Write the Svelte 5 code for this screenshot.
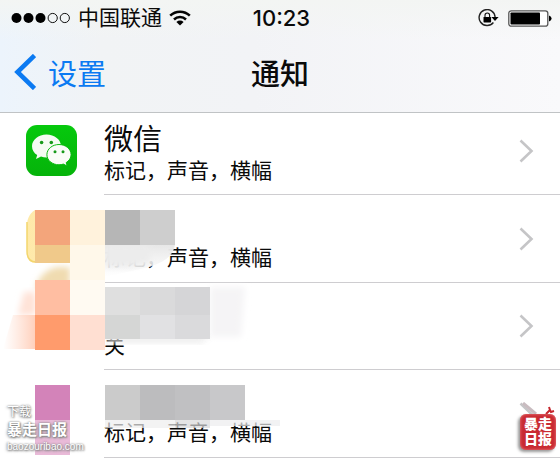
<script>
  const detail = '标记，声音，横幅';
  const rows = [
    { title: '微信', detail, icon: true },
    { title: '', detail },
    { title: '', detail: '关' },
    { title: '', detail }
  ];

  // x, y, width, height, colour and opacity of each redaction tile
  const tiles = [
    [35, 0, 35, 35, '#f3a57b', 1],
    [70, 0, 35, 35, '#fff2dc', 1],
    [105, 0, 35, 35, '#b6b6b6', 1],
    [140, 0, 35, 35, '#cecece', 1],
    [35, 35, 35, 18, '#f0c98a', 1],
    [70, 35, 35, 35, '#fff8ea', 1],
    [35, 70, 35, 35, '#ffbea2', 1],
    [70, 70, 35, 35, '#fffaf2', 1],
    [105, 77, 35, 28, '#dfdfdf', 1],
    [140, 77, 35, 28, '#dadadb', 1],
    [175, 77, 35, 28, '#d5d5d7', 1],
    [35, 105, 35, 35, '#ff9b6c', 1],
    [70, 105, 35, 35, '#ffdfd2', 1],
    [105, 105, 35, 24, '#d5d6d5', 1],
    [140, 105, 35, 24, '#e1e1e3', 1],
    [175, 105, 35, 24, '#dadadc', 1],
    [35, 175, 35, 35, '#d383b9', 1],
    [105, 175, 35, 35, '#cbcbcb', 1],
    [140, 175, 35, 35, '#bcbcbe', 1],
    [175, 175, 35, 35, '#c0c0c2', 1],
    [210, 175, 35, 35, '#c8c8ca', 1],
    [35, 210, 35, 35, '#e9bad8', 1],
    [105, 210, 70, 8, '#eeeeee', 0.7],
    [175, 210, 35, 8, '#d8d8da', 0.7],
    [210, 210, 70, 6, '#ececee', 0.7]
  ];
</script>

<div class="screen" lang="zh-CN">
  <header>
    <div class="status">
      <div class="carrier">
        <svg width="60" height="12" viewBox="0 0 60 12" role="img" aria-label="信号">
          <circle cx="5.5" cy="6" r="5" /><circle cx="17.5" cy="6" r="5" /><circle cx="29.5" cy="6" r="5" />
          <g fill="none" stroke="#111" stroke-width="1"><circle cx="41.7" cy="6" r="4.6" /><circle cx="53.8" cy="6" r="4.6" /></g>
        </svg>
        <span>中国联通</span>
        <svg class="wifi" width="22" height="16" viewBox="0 0 22 16" role="img" aria-label="Wi-Fi">
          <g fill="none" stroke="#050505" stroke-width="2.5">
            <path d="M1.2 5.7a14 14 0 0 1 19.6 0" /><path d="M5 9.5a8.6 8.6 0 0 1 12 0" />
          </g>
          <path d="M7.4 11.9a5.2 5.2 0 0 1 7.2 0L11 15.6z" />
        </svg>
      </div>
      <time>10:23</time>
      <div class="power">
        <svg width="21" height="18" viewBox="0 0 21 18" role="img" aria-label="竖排方向锁定">
          <path d="M15.4 13.5A8 8 0 1 1 17.1 8" fill="none" stroke="#222" stroke-width="1.4" />
          <path d="M13.4 8h7.2L17 12z" />
          <rect x="5.5" y="8" width="7.6" height="5.4" rx=".6" />
          <path d="M7 8.5V6.3a2.3 2.3 0 0 1 4.6 0v2.2" fill="none" stroke="#111" stroke-width="1.1" />
        </svg>
        <svg width="44" height="17" viewBox="0 0 44 17" role="img" aria-label="电池">
          <rect x=".8" y=".8" width="39" height="15.4" rx="2.5" fill="#fff" stroke="#555" stroke-width="1.3" />
          <rect x="2.500" y="2.500" width="29.500" height="12" rx=".8" />
          <path d="M41 5.500q2.600.8 2.600 3t-2.600 3z" />
        </svg>
      </div>
    </div>
    <nav>
      <a href="#settings">
        <svg width="22" height="36" viewBox="0 0 22 36" aria-hidden="true"><path d="M20.500 1.500 3.500 18l17 16.500" fill="none" stroke="#0b7af2" stroke-width="4.600" /></svg>
        设置
      </a>
      <h1>通知</h1>
    </nav>
  </header>

  <main>
    <ul>
      {#each rows as row}
        <li>
          <div class="app">
            {#if row.icon}
              <svg width="51" height="51" viewBox="0 0 51 51" role="img" aria-label="微信">
                <defs><linearGradient id="green" x2="0" y2="1"><stop stop-color="#06c90d" /><stop offset="1" stop-color="#05b30a" /></linearGradient></defs>
                <rect width="51" height="51" rx="11" fill="url(#green)" />
                <path d="M20.5 9.500C12.500 9.500 6 14.700 6 21.200c0 3.700 2 6.800 5.200 8.900L10 34l5-2.400a18 18 0 0 0 5.500 1c8 0 14.500-5.100 14.500-11.500S28.500 9.500 20.500 9.500z" fill="#f5fbf3" />
                <path d="M33 19.500c-6.700 0-12.100 4.500-12.100 10.200S26.300 39.800 33 39.800c1.600 0 3-.3 4.400-.7l3.800 2-1-3.500c3-1.900 4.900-4.700 4.900-7.900 0-5.700-5.400-10.200-12.100-10.200z" fill="#fafcf8" stroke="#08b90c" stroke-width="1" />
                <g fill="#17991a"><circle cx="15.600" cy="17.500" r="1.800" /><circle cx="25.300" cy="17.500" r="1.800" /><circle cx="29" cy="26.800" r="1.500" /><circle cx="37" cy="26.800" r="1.500" /></g>
              </svg>
            {/if}
          </div>
          <div class="body">
            <div class="text">
              <h2>{row.title}</h2>
              <p>{row.detail}</p>
            </div>
            <svg class="chevron" width="15" height="24" viewBox="0 0 15 24" aria-hidden="true"><path d="M1.500 1.500 12.500 12 1.500 22.500" fill="none" stroke="#c5c5c7" stroke-width="2.600" /></svg>
          </div>
        </li>
      {/each}
    </ul>

    <svg class="mosaic" width="290" height="249" viewBox="0 0 290 249" aria-hidden="true">
      <defs>
        <filter id="soft" x="-20%" y="-20%" width="140%" height="140%"><feGaussianBlur stdDeviation="3" /></filter>
        <linearGradient id="veil" x2="0" y2="1"><stop stop-color="#e7e7e7" /><stop offset="1" stop-color="#fff" stop-opacity=".75" /></linearGradient>
        <linearGradient id="peach"><stop stop-color="#ffd9c9" stop-opacity="0" /><stop offset="1" stop-color="#ffd0bc" /></linearGradient>
        <linearGradient id="gold"><stop stop-color="#ffeaa8" /><stop offset="1" stop-color="#f9e5bd" /></linearGradient>
      </defs>
      <path d="M35 0c-6 4-8 9-8 16v26q0 11 9 11h34V0z" fill="url(#gold)" />
      <path d="M27 12v29q0 11 9 11" fill="none" stroke="#f3d66e" stroke-width="1.500" />
      <path d="M36 77q4-15 20-20h14v22H36z" fill="#f0dbb0" filter="url(#soft)" />
      <path d="M105 35h70q-3 18-35 24l-35 8z" fill="url(#veil)" />
      <path d="M105 35h45v17l-20 5h-25z" fill="#ececec" filter="url(#soft)" />
      <path d="M24 82h12v23H18z" fill="#ffe3d8" filter="url(#soft)" />
      <path d="M13 105h22v34H3z" fill="url(#peach)" />
      <path d="M210 77h35l-4 50h-31z" fill="#f5f4f6" filter="url(#soft)" />
      <path d="M106 125h104l-8 8h-96z" fill="#e9e9e9" filter="url(#soft)" opacity=".8" />
      {#each tiles as [x, y, w, h, fill, opacity]}
        <rect {x} {y} width={w} height={h} {fill} {opacity} />
      {/each}
    </svg>

    <div class="watermark">
      <span>下载</span>
      <strong>暴走日报</strong>
      <small>baozouribao.com</small>
    </div>

    <div class="stamp">
      <svg width="36" height="12" viewBox="0 0 36 12" aria-hidden="true">
        <path d="m3 1 13 11" stroke="#c9bcc0" stroke-width="3" />
        <path d="m26 12 4-4 1 2 3-1M30 8l-1-3" fill="none" stroke="#c5262d" stroke-width="2" />
      </svg>
      <strong>暴走<br />日报</strong>
    </div>
  </main>
</div>

<style>
  :global(body) {
    margin: 0;
    background: #fff;
  }

  .screen {
    font-family: 'Liberation Sans', 'Noto Sans CJK SC', sans-serif;
    color: #0a0a0a;
    overflow: hidden;
  }

  h1, h2, p, ul {
    margin: 0;
    padding: 0;
    font-weight: 400;
  }

  header {
    position: relative;
    z-index: 1;
    background: linear-gradient(180deg, #f3f5f3 0, #f3f5f300 40px), linear-gradient(90deg, #ecf4fc, #f1f3f5 18%, #f2f3f6 45%, #f9f9fb);
    border-bottom: 1px solid #c0c3c5;
  }

  .status {
    display: grid;
    grid-template-columns: 1fr auto 1fr;
    align-items: center;
    height: 36px;
    padding: 0 8px 0 11px;
    font-size: 21px;
  }

  .carrier {
    display: flex;
    align-items: center;
    gap: 7px;
    line-height: 36px;
  }

  time {
    font-family: Inter, 'Liberation Sans', sans-serif;
    font-size: 22px;
    font-weight: 500;
  }

  .power {
    display: flex;
    align-items: center;
    justify-content: flex-end;
    gap: 9px;
  }

  nav {
    display: grid;
    grid-template-columns: 1fr auto 1fr;
    align-items: center;
    height: 76px;
    padding: 0 14px 4px;
    box-sizing: border-box;
    font-size: 29px;
  }

  nav a {
    display: flex;
    align-items: center;
    gap: 12px;
    color: #0b7af2;
    text-decoration: none;
  }

  h1 {
    font-size: 29px;
    font-weight: 500;
  }

  main {
    position: relative;
    margin-top: -5px;
  }

  ul {
    list-style: none;
  }

  li {
    display: flex;
    height: 87px;
  }

  li:nth-child(even) {
    height: 88px;
  }

  .app {
    flex: 0 0 78px;
    padding: 17px 0 0 26px;
    box-sizing: border-box;
  }

  .body {
    display: flex;
    flex: 1;
    align-items: center;
    justify-content: space-between;
    margin-left: 26px;
    padding-right: 26px;
    border-bottom: 1px solid #cecdd0;
  }

  .text {
    padding-top: 5px;
  }

  h2 {
    height: 34px;
    font-size: 29px;
    line-height: 34px;
  }

  p {
    font-size: 21px;
    line-height: 28px;
  }

  .mosaic {
    position: absolute;
    top: 102px;
    left: 0;
  }

  .watermark {
    position: absolute;
    top: 296px;
    left: 7px;
    display: flex;
    flex-direction: column;
    color: #fff;
    text-shadow: 0 0 2px #777, 1px 1px 2px #888, -1px 1px 3px #aaa;
  }

  .watermark span {
    font-size: 12px;
    line-height: 16px;
  }

  .watermark strong {
    font-size: 15px;
    line-height: 20px;
  }

  .watermark small {
    font-size: 10px;
    line-height: 14px;
  }

  .stamp {
    position: absolute;
    top: 294px;
    right: 4px;
    display: flex;
    flex-direction: column;
  }

  .stamp strong {
    padding: 3px 4px;
    border-radius: 6px;
    background: #c92a32;
    box-shadow: -2px 2px 3px #999, inset 0 0 3px #e88;
    color: #fff;
    font-size: 14px;
    font-weight: 900;
    line-height: 15px;
    text-align: center;
  }
</style>
